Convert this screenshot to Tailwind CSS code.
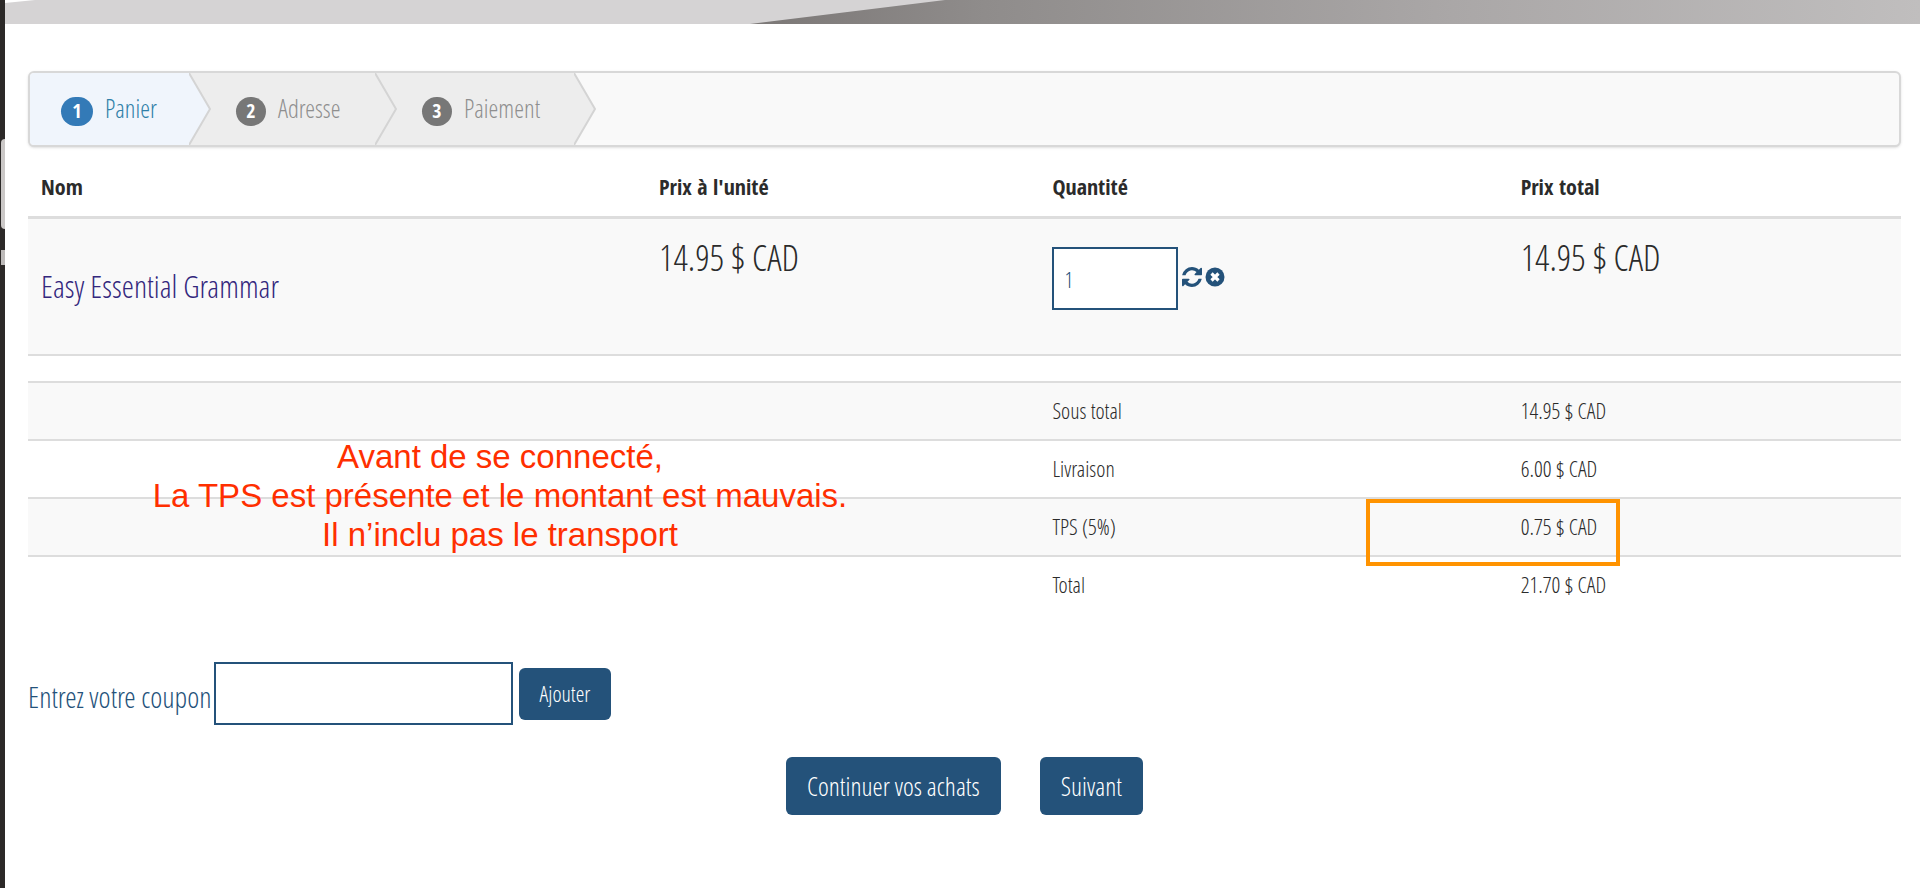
<!DOCTYPE html>
<html lang="fr">
<head>
    <meta charset="UTF-8">
    <meta name="viewport" content="width=device-width, initial-scale=1.0">
    <title>Panier</title>
    <script src="https://cdn.jsdelivr.net/npm/@tailwindcss/browser@4"></script>
</head>
<body class="bg-white text-[#2b2b2b] font-light font-['Open_Sans_Condensed_Light','Open_Sans_Light_Condensed','OpenSans-CondensedLight','Liberation_Sans_Narrow',sans-serif]">
    <div class="relative flex min-h-screen">
        <!-- Window edge -->
        <div class="w-[5px] shrink-0 bg-[#2c2928] pt-[139px] pl-px">
            <div class="h-[90px] rounded-l-sm bg-[#cbc8c7]"></div>
            <div class="mt-[21px] h-[15px] bg-[#bdbab9]"></div>
        </div>

        <div class="flex-1 min-w-0">
            <!-- Banner -->
            <svg class="block w-full h-6" viewBox="0 0 1915 24" preserveAspectRatio="none">
                <defs>
                    <linearGradient id="dark" x1="0" x2="1">
                        <stop offset="0" stop-color="#7b7776"/>
                        <stop offset="0.2" stop-color="#8f8c8b"/>
                        <stop offset="0.6" stop-color="#aaa7a7"/>
                        <stop offset="1" stop-color="#c0bebe"/>
                    </linearGradient>
                </defs>
                <rect width="1915" height="24" fill="#d5d3d4"/>
                <path d="M0 0H30L0 3z" fill="#fff"/>
                <path d="M745 24L940 0H1915V24z" fill="url(#dark)"/>
            </svg>

            <main class="pl-[23px] pr-[19px] pt-[47px]">
                <!-- Steps -->
                <ol class="flex h-[76px] overflow-hidden rounded-md border-2 border-[#d8d8d8] bg-[#f9f9f9] text-[25px] text-[#8f8f8f] shadow-sm">
                    <li class="flex w-[159px] shrink-0 items-center bg-[#f0f5fc] pl-[31px] text-[#2f7fa8]">
                        <span class="mr-3 mt-1 flex h-[29px] w-8 items-center justify-center rounded-full bg-[#337ab7] text-xl font-bold text-white font-['Open_Sans_Condensed',sans-serif]">1</span>
                        <a href="#">Panier</a>
                    </li>
                    <li class="flex w-[186px] shrink-0 items-center bg-[#ededed]">
                        <svg class="h-full w-[22px] shrink-0" viewBox="0 0 22 72" preserveAspectRatio="none"><path d="M0 0L21 36L0 72" fill="#f0f5fc" stroke="#d4d4d4" stroke-width="2"/></svg>
                        <span class="ml-[25px] mr-3 mt-1 flex h-[29px] w-[30px] items-center justify-center rounded-full bg-[#777] text-xl font-bold text-white font-['Open_Sans_Condensed',sans-serif]">2</span>
                        Adresse
                    </li>
                    <li class="flex w-[199px] shrink-0 items-center bg-[#ededed]">
                        <svg class="h-full w-[22px] shrink-0" viewBox="0 0 22 72" preserveAspectRatio="none"><path d="M0 0L21 36L0 72" fill="#ededed" stroke="#d4d4d4" stroke-width="2"/></svg>
                        <span class="ml-[25px] mr-3 mt-1 flex h-[29px] w-[30px] items-center justify-center rounded-full bg-[#777] text-xl font-bold text-white font-['Open_Sans_Condensed',sans-serif]">3</span>
                        Paiement
                    </li>
                    <li class="h-full" aria-hidden="true">
                        <svg class="h-full w-[22px]" viewBox="0 0 22 72" preserveAspectRatio="none"><path d="M0 0L21 36L0 72" fill="#ededed" stroke="#d4d4d4" stroke-width="2"/></svg>
                    </li>
                </ol>

                <!-- Cart -->
                <table class="w-full table-fixed text-left">
                    <colgroup>
                        <col class="w-[33%]">
                        <col class="w-[21%]">
                        <col class="w-[25%]">
                        <col class="w-[21%]">
                    </colgroup>
                    <thead>
                        <tr class="h-[70px] border-b-3 border-[#ddd] text-[22px] font-bold font-['Open_Sans_Condensed',sans-serif]">
                            <th class="px-[13px] pt-2.5">Nom</th>
                            <th class="px-[13px] pt-2.5">Prix à l'unité</th>
                            <th class="px-[13px] pt-2.5">Quantité</th>
                            <th class="px-[13px] pt-2.5">Prix total</th>
                        </tr>
                    </thead>
                    <tbody>
                        <tr class="h-[138px] border-b-2 border-[#ddd] bg-[#f9f9f9] align-top">
                            <td class="px-[13px] align-middle text-[31px] text-[#33277d]"><a href="#">Easy Essential Grammar</a></td>
                            <td class="px-[13px] pt-3 text-4xl leading-[54px]">14.95 $ CAD</td>
                            <td class="px-[13px] pt-7">
                                <div class="flex gap-[3px]">
                                    <input type="text" value="1" aria-label="Quantité" class="h-[63px] w-[126px] border-2 border-[#24527a] bg-white px-[10px] pt-0.5 text-[22px] text-[#24527a]">
                                    <button type="button" aria-label="Mettre à jour" class="ml-px mt-5 h-5 w-5">
                                        <svg class="h-5 w-5" viewBox="0 0 1536 1536" fill="#24527a"><path d="M1511 928q0 5-1 7-64 268-268 434.500T764 1536q-146 0-282.500-55T238 1324l-129 129q-19 19-45 19t-45-19-19-45V960q0-26 19-45t45-19h448q26 0 45 19t19 45-19 45l-137 137q71 66 161 102t187 36q134 0 250-65t186-179q11-17 53-117 8-23 30-23h192q13 0 22.500 9.500t9.500 22.500zm25-800v448q0 26-19 45t-45 19h-448q-26 0-45-19t-19-45 19-45l138-138Q969 256 768 256q-134 0-250 65T332 500q-11 17-53 117-8 23-30 23H50q-13 0-22.500-9.500T18 608v-7q65-268 270-434.500T768 0q146 0 284 55.500T1297 212l130-129q19-19 45-19t45 19 19 45z"/></svg>
                                    </button>
                                    <button type="button" aria-label="Supprimer" class="mt-5 h-5 w-5">
                                        <svg class="h-5 w-5" viewBox="0 0 20 20"><circle cx="10" cy="10" r="9.500" fill="#24527a"/><path d="M6.500 6.500l7 7M13.500 6.500l-7 7" stroke="#fff" stroke-width="3.200"/></svg>
                                    </button>
                                </div>
                            </td>
                            <td class="px-[13px] pt-3 text-4xl leading-[54px]">14.95 $ CAD</td>
                        </tr>
                    </tbody>
                </table>

                <!-- Totals -->
                <table class="mt-[25px] w-full table-fixed text-left text-[22px]">
                    <colgroup>
                        <col class="w-[54%]">
                        <col class="w-[25%]">
                        <col class="w-[21%]">
                    </colgroup>
                    <tbody>
                        <tr class="h-[58px] border-t-2 border-[#ddd] bg-[#f9f9f9]">
                            <td></td><td class="px-[13px] pb-0.5">Sous total</td><td class="px-[13px] pb-0.5">14.95 $ CAD</td>
                        </tr>
                        <tr class="h-[58px] border-t-2 border-[#ddd]">
                            <td></td><td class="px-[13px] pb-0.5">Livraison</td><td class="px-[13px] pb-0.5">6.00 $ CAD</td>
                        </tr>
                        <tr class="h-[58px] border-t-2 border-[#ddd] bg-[#f9f9f9]">
                            <td></td><td class="px-[13px] pb-0.5">TPS (5%)</td><td class="px-[13px] pb-0.5">0.75 $ CAD</td>
                        </tr>
                        <tr class="h-[58px] border-t-2 border-[#ddd]">
                            <td></td><td class="px-[13px] pb-0.5">Total</td><td class="px-[13px] pb-0.5">21.70 $ CAD</td>
                        </tr>
                    </tbody>
                </table>

                <!-- Coupon -->
                <form class="mt-12 flex items-center text-[#24527a]">
                    <label for="coupon" class="mr-0.5 mt-1.5 text-[29px]">Entrez votre coupon</label>
                    <input type="text" id="coupon" class="h-[63px] w-[299px] border-2 border-[#24527a] bg-white px-[10px] text-[22px]">
                    <button type="button" class="ml-1.5 h-[52px] rounded-md bg-[#24527a] px-[21px] text-[22px] text-white">Ajouter</button>
                </form>

                <div class="mt-8 flex justify-center gap-[39px]">
                    <a href="#" class="flex h-[58px] items-center rounded-md bg-[#24527a] px-[21px] text-[26px] text-white">Continuer vos achats</a>
                    <button type="button" class="h-[58px] rounded-md bg-[#24527a] px-[21px] text-[26px] text-white">Suivant</button>
                </div>
            </main>
        </div>

        <!-- Notes -->
        <p class="absolute left-[150px] top-[437px] w-[700px] whitespace-nowrap text-center font-['Liberation_Sans',sans-serif] text-[33px] font-normal leading-[39px] text-[#ff2f00]">
            Avant de se connecté,<br>
            La TPS est présente et le montant est mauvais.<br>
            Il n’inclu pas le transport
        </p>
        <div class="absolute left-[1366px] top-[499px] h-[67px] w-[254px] border-4 border-[#ff9300]"></div>
    </div>
</body>
</html>
